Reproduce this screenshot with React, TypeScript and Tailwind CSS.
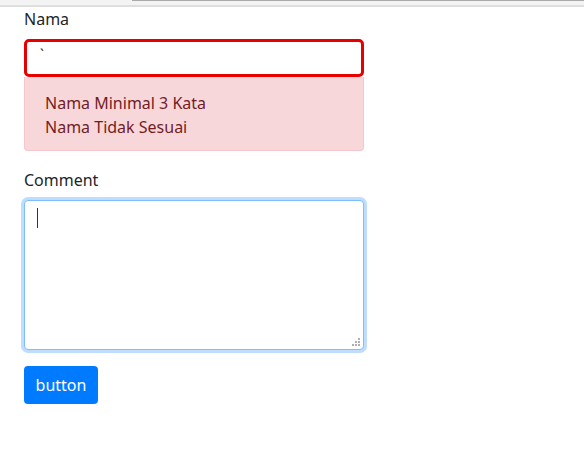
import React from "react";

export default function App() {
  return (
    <div className="w-[584px] h-[468px] bg-white text-[#212529] text-[16px] leading-[24px]" style={{ fontFamily: '"Noto Sans", "Open Sans", sans-serif' }}>
      <div className="h-[7px] bg-[#f3f3f4] border-b-2 border-[#dedede] flex">
        <div className="w-[132px]" />
        <div className="flex-1 h-[1px] bg-[#a9a9ab]" />
      </div>
      <div className="pl-[24px] w-[364px]">
        <div className="h-[24px] mb-[8px]">Nama</div>
        <div className="h-[38px] border-[3px] border-[#e60000] rounded-[5px] bg-white pl-[13px] pt-[1px] text-[14px] leading-[24px]">`</div>
        <div className="h-[74px] bg-[#f8d7da] border border-[#f5c6cb] border-t-0 rounded-b-[4px] px-[20px] pt-[14px] text-[#721c24]">
          <div>Nama Minimal 3 Kata</div>
          <div>Nama Tidak Sesuai</div>
        </div>
        <div className="h-[24px] mt-[17px] mb-[8px]">Comment</div>
        <div className="relative h-[150px] border border-[#80bdff] rounded-[4px] bg-white shadow-[0_0_0_3px_rgba(0,123,255,0.25)] pl-[12px] pt-[7px]">
          <div className="w-[1px] h-[20px] bg-[#333]" />
          <svg className="absolute right-[3px] bottom-[3px]" width="8" height="8" viewBox="0 0 8 8">
            <rect x="6" y="0" width="2" height="2" fill="#b0b0b0" />
            <rect x="3" y="3" width="2" height="2" fill="#b0b0b0" />
            <rect x="6" y="3" width="2" height="2" fill="#b0b0b0" />
            <rect x="0" y="6" width="2" height="2" fill="#b0b0b0" />
            <rect x="3" y="6" width="2" height="2" fill="#b0b0b0" />
            <rect x="6" y="6" width="2" height="2" fill="#b0b0b0" />
          </svg>
        </div>
        <button className="mt-[16px] w-[74px] h-[38px] bg-[#007bff] text-white rounded-[4px] flex items-center justify-center">button</button>
      </div>
    </div>
  );
}
